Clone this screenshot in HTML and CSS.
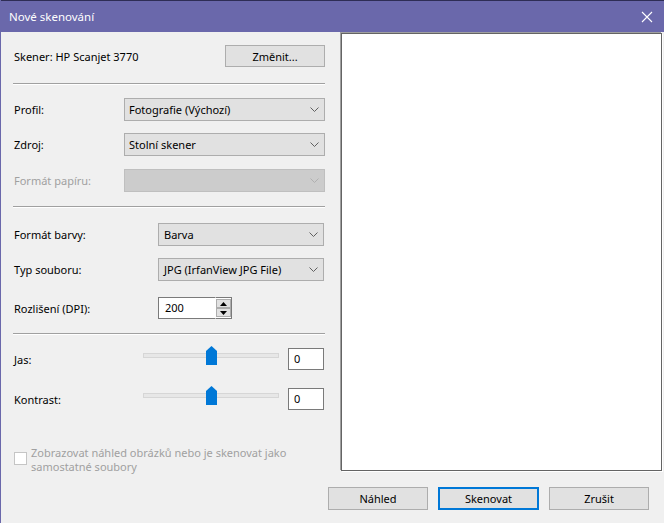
FILE: index.html
```html
<!DOCTYPE html>
<html lang="cs">
<head>
<meta charset="utf-8">
<title>Nové skenování</title>
<link rel="stylesheet" href="styles.css">
</head>
<body>
<div class="window">
  <div class="titlebar">
    <span class="title">Nové skenování</span>
    <svg class="close" width="12" height="12" viewBox="0 0 12 12"><path d="M1 1 L11 11 M11 1 L1 11" stroke="#fff" stroke-width="1.1" fill="none"/></svg>
  </div>
  <div class="main">
    <div class="form">
      <div class="row row-scanner">
        <span class="label">Skener: HP Scanjet 3770</span>
        <button class="btn btn-change">Změnit...</button>
      </div>
      <div class="sep sep1"></div>
      <div class="row row-profil">
        <span class="label lw1">Profil:</span>
        <div class="select sw1"><span>Fotografie (Výchozí)</span><svg class="chev" width="9" height="5" viewBox="0 0 9 5"><path d="M0.5 0.5 L4.5 4.5 L8.5 0.5" stroke="#606060" fill="none"/></svg></div>
      </div>
      <div class="row row-zdroj">
        <span class="label lw1">Zdroj:</span>
        <div class="select sw1"><span>Stolní skener</span><svg class="chev" width="9" height="5" viewBox="0 0 9 5"><path d="M0.5 0.5 L4.5 4.5 L8.5 0.5" stroke="#606060" fill="none"/></svg></div>
      </div>
      <div class="row row-papir">
        <span class="label lw1 disabled">Formát papíru:</span>
        <div class="select sw1 select-disabled"><span></span><svg class="chev" width="9" height="5" viewBox="0 0 9 5"><path d="M0.5 0.5 L4.5 4.5 L8.5 0.5" stroke="#b0b0b0" fill="none"/></svg></div>
      </div>
      <div class="sep sep2"></div>
      <div class="row row-barva">
        <span class="label lw2">Formát barvy:</span>
        <div class="select sw2"><span>Barva</span><svg class="chev" width="9" height="5" viewBox="0 0 9 5"><path d="M0.5 0.5 L4.5 4.5 L8.5 0.5" stroke="#606060" fill="none"/></svg></div>
      </div>
      <div class="row row-typ">
        <span class="label lw2">Typ souboru:</span>
        <div class="select sw2"><span>JPG (IrfanView JPG File)</span><svg class="chev" width="9" height="5" viewBox="0 0 9 5"><path d="M0.5 0.5 L4.5 4.5 L8.5 0.5" stroke="#606060" fill="none"/></svg></div>
      </div>
      <div class="row row-dpi">
        <span class="label lw2">Rozlišení (DPI):</span>
        <div class="spin">
          <div class="spin-input">200</div>
          <div class="spin-btns">
            <div class="spin-btn"><svg width="7" height="4" viewBox="0 0 7 4"><path d="M0 4 L3.5 0 L7 4 Z" fill="#000"/></svg></div>
            <div class="spin-btn"><svg width="7" height="4" viewBox="0 0 7 4"><path d="M0 0 L3.5 4 L7 0 Z" fill="#000"/></svg></div>
          </div>
        </div>
      </div>
      <div class="sep sep3"></div>
      <div class="row row-jas">
        <span class="label lw3">Jas:</span>
        <div class="slider">
          <div class="track"></div>
          <svg class="thumb" width="11" height="19" viewBox="0 0 11 19"><path d="M0 5 L5.5 0 L11 5 L11 19 L0 19 Z" fill="#0078d7"/></svg>
        </div>
        <div class="value">0</div>
      </div>
      <div class="row row-kontrast">
        <span class="label lw3">Kontrast:</span>
        <div class="slider">
          <div class="track"></div>
          <svg class="thumb" width="11" height="19" viewBox="0 0 11 19"><path d="M0 5 L5.5 0 L11 5 L11 19 L0 19 Z" fill="#0078d7"/></svg>
        </div>
        <div class="value">0</div>
      </div>
      <div class="check-row">
        <span class="checkbox"></span>
        <span class="check-text">Zobrazovat náhled obrázků nebo je skenovat jako samostatné soubory</span>
      </div>
    </div>
    <div class="preview"></div>
  </div>
  <div class="footer">
    <button class="btn btn-foot">Náhled</button>
    <button class="btn btn-foot btn-default">Skenovat</button>
    <button class="btn btn-foot">Zrušit</button>
  </div>
</div>
</body>
</html>
```

FILE: styles.css
```css
* { box-sizing: border-box; }
html, body {
  margin: 0;
  padding: 0;
  width: 664px;
  height: 523px;
  overflow: hidden;
  background: #f0f0f0;
}
.window {
  width: 664px;
  height: 523px;
  background: #f0f0f0;
  border-left: 1px solid #6a68ab;
  font-family: "Noto Sans", "Open Sans", sans-serif;
  font-size: 11px;
  color: #000;
  display: flex;
  flex-direction: column;
}
.titlebar {
  height: 32px;
  flex: none;
  background: #6a68ab;
  border-top: 1px solid #2e2d55;
  display: flex;
  align-items: center;
  justify-content: space-between;
  padding: 0 10px 0 8px;
  color: #fff;
}
.title { font-size: 11.5px; }
.close { margin-right: 1px; }
.main {
  height: 439px;
  flex: none;
  display: flex;
}
.form {
  width: 339px;
  flex: none;
  padding: 0 15px 0 12px;
  display: flex;
  flex-direction: column;
}
.row {
  display: flex;
  align-items: center;
  flex: none;
}
.label { white-space: nowrap; padding-left: 1px; }
.disabled { color: #a0a0a0; }
.lw1 { width: 111px; }
.lw2 { width: 145px; }
.lw3 { width: 130px; }

.row-scanner { margin-top: 13px; height: 22px; justify-content: space-between; }
.sep {
  flex: none;
  height: 2px;
  border-top: 1px solid #a0a0a0;
  border-bottom: 1px solid #ffffff;
}
.sep1 { margin-top: 16px; }
.row-profil { margin-top: 13px; height: 23px; }
.row-zdroj { margin-top: 12px; height: 23px; }
.row-papir { margin-top: 13px; height: 23px; }
.sep2 { margin-top: 14px; }
.row-barva { margin-top: 15px; height: 23px; }
.row-typ { margin-top: 12px; height: 23px; }
.row-dpi { margin-top: 16px; height: 22px; }
.sep3 { margin-top: 14px; }
.row-jas { margin-top: 13px; height: 22px; }
.row-kontrast { margin-top: 18px; height: 22px; }

.btn {
  font-family: inherit;
  font-size: 11px;
  color: #000;
  background: #e1e1e1;
  border: 1px solid #adadad;
  padding: 0;
  margin: 0;
  border-radius: 0;
}
.btn-change { width: 100px; height: 22px; }

.select {
  height: 23px;
  background: #e1e1e1;
  border: 1px solid #adadad;
  display: flex;
  align-items: center;
  justify-content: space-between;
  padding: 0 4px 1px 4px;
}
.sw1 { width: 201px; }
.sw2 { width: 166px; padding-left: 5px; }
.select-disabled { background: #cccccc; border-color: #bfbfbf; }
.chev { margin-right: 1px; margin-top: 1px; }

.spin { display: flex; height: 22px; }
.spin-input {
  width: 57px;
  height: 22px;
  background: #fff;
  border: 1px solid #7a7a7a;
  border-right: none;
  padding: 2px 0 0 6px;
}
.spin-btns {
  width: 17px;
  height: 22px;
  background: #fff;
  border: 1px solid #7a7a7a;
  border-left: 1px solid #ffffff;
  display: flex;
  flex-direction: column;
  justify-content: space-between;
  padding: 1px 0;
}
.spin-btn {
  height: 9px;
  width: 15px;
  background: #e1e1e1;
  border: 1px solid #adadad;
  display: flex;
  align-items: center;
  justify-content: center;
}

.slider {
  position: relative;
  width: 136px;
  height: 19px;
  align-self: flex-start;
  margin-top: -2px;
}
.track {
  position: absolute;
  left: 0;
  right: 0;
  top: 7px;
  height: 5px;
  background: #e7e7e7;
  border: 1px solid #d6d6d6;
}
.thumb {
  position: absolute;
  left: 63px;
  top: 0;
}
.value {
  margin-left: 9px;
  width: 36px;
  height: 22px;
  background: #fff;
  border: 1px solid #7a7a7a;
  padding: 2px 0 0 5px;
}

.check-row {
  margin-top: 36px;
  display: flex;
  align-items: flex-start;
  color: #a0a0a0;
  line-height: 14px;
}
.checkbox {
  flex: none;
  width: 13px;
  height: 13px;
  background: #fff;
  border: 1px solid #c5c5c5;
  margin: 6px 4px 0 1px;
}
.check-text { width: 285px; }

.preview {
  width: 321px;
  height: 438px;
  margin-top: 1px;
  margin-left: 1px;
  background: #fff;
  border: 1px solid #646464;
  box-shadow: -1px -1px 0 #a0a0a0, 1px 1px 0 #ffffff;
}

.footer {
  flex: none;
  height: 52px;
  display: flex;
  justify-content: flex-end;
  align-items: flex-start;
  gap: 10px;
  padding: 16px 15px 0 0;
}
.btn-foot { width: 100px; height: 23px; }
.btn-default { width: 101px; border: 2px solid #0078d7; }
```
